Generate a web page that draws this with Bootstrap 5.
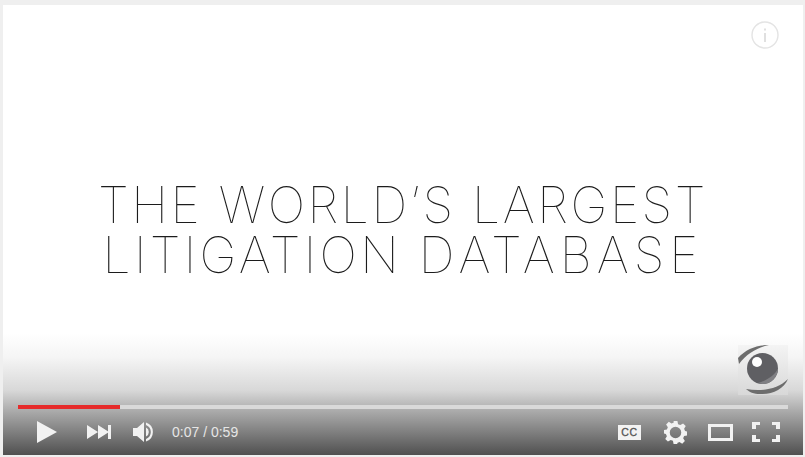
<!DOCTYPE html>
<html lang="en">
<head>
<meta charset="utf-8">
<title>Video player</title>
<link href="https://cdn.jsdelivr.net/npm/bootstrap@5.3.0/dist/css/bootstrap.min.css" rel="stylesheet">
<style>
html,body{height:100%;}
body{background:#efefef;overflow:hidden;font-family:"Liberation Sans",Arial,sans-serif;padding:5px 2px 2px 3px;}
.vp-frame{height:450px;background:#fff;}
.vp-top{height:48px;padding:16px 24px 0 0;}
.vp-stage{flex:1 1 auto;padding-top:127px;}
.vp-title{font-family:"Inter",sans-serif;font-weight:100;font-size:50px;line-height:50px;letter-spacing:2.5px;color:#1c1c1c;margin:0;text-align:center;}
.vp-word-a{letter-spacing:3.3px;}
.vp-word-b{letter-spacing:5px;}
.vp-bottom{height:122px;background:linear-gradient(to bottom,#fff 0,#f5f5f5 20%,#d8d8d8 47%,#a8a8a8 65%,#808080 81%,#505050 100%);padding:0 15px;}
.vp-logo{width:50px;height:50px;margin-top:12px;background:linear-gradient(#f4f4f4,#d8d8d8);}
.vp-track{height:4px;margin:10px 0 0 0;background:#d9d9d9;}
.vp-fill{width:102px;height:4px;background:#e62b2b;}
.vp-bar{height:46px;padding-left:19px;color:#e8e8e8;}
.vp-time{font-size:14px;color:#e6e6e6;margin-left:17px;}
.vp-ic{display:block;fill:#f2f2f2;}
</style>
</head>
<body>
<div class="vp-frame d-flex flex-column">
  <div class="vp-top d-flex justify-content-end">
    <svg width="28" height="28" viewBox="0 0 28 28" aria-label="info"><circle cx="14" cy="14" r="13" fill="none" stroke="#e4e4e4" stroke-width="1.4"/><rect x="13" y="12" width="2" height="9" fill="#e0e0e0"/><rect x="13" y="7.500" width="2" height="2" fill="#e0e0e0"/></svg>
  </div>
  <div class="vp-stage">
    <h1 class="vp-title">THE WORLD’S LARGEST<br><span class="vp-word-a">LITIGATION</span> <span class="vp-word-b">DATABASE</span></h1>
  </div>
  <div class="vp-bottom d-flex flex-column">
    <div class="d-flex justify-content-end">
      <svg class="vp-logo" viewBox="0 0 50 50" aria-label="logo">
        <path d="M0 13C8 4 19 0 31 0 21 2 9 8 1 19Z" fill="#6d6d6d"/>
        <path d="M8 44C24 47 40 44 50 34 46 44 34 50 22 49 16 49 11 47 8 44Z" fill="#6d6d6d"/>
        <circle cx="24.500" cy="23.500" r="15.500" fill="#5f5f63"/>
        <path d="M24.500 39A15.500 15.500 0 0 0 40 23.500C37 30 30 35 20 38Z" fill="#808084"/>
        <circle cx="19" cy="17" r="5" fill="#fff"/>
      </svg>
    </div>
    <div class="vp-track"><div class="vp-fill"></div></div>
    <div class="vp-bar d-flex align-items-center">
      <svg class="vp-ic" width="20" height="22" viewBox="0 0 20 22" aria-label="play"><path d="M0 0 20 11 0 22Z"/></svg>
      <svg class="vp-ic" width="24" height="14" viewBox="0 0 24 14" style="margin-left:30px" aria-label="next"><path d="M0 0 11 7 0 14Z M11 0 22 7 11 14Z"/><rect x="21" y="0" width="3" height="14"/></svg>
      <svg class="vp-ic" width="22" height="22" viewBox="0 0 22 22" style="margin-left:22px" aria-label="volume"><path d="M0 7H4L11 1V21L4 15H0Z"/><path d="M13 6.500A5 5 0 0 1 13 15.500Z"/><path d="M13 1.500A10 10 0 0 1 13 20.500V18A7.500 7.500 0 0 0 13 4Z"/></svg>
      <span class="vp-time">0:07 / 0:59</span>
      <div class="flex-grow-1"></div>
      <svg class="vp-ic" width="23" height="15" viewBox="0 0 23 15" aria-label="captions"><rect width="23" height="15" fill="#f2f2f2"/><text x="11.500" y="11" text-anchor="middle" font-family="Liberation Sans, sans-serif" font-size="10.500" letter-spacing=".6" stroke="#555" stroke-width=".3" fill="#555">CC</text></svg>
      <svg class="vp-ic" width="23" height="23" viewBox="0 0 24 24" style="margin-left:23px" aria-label="settings"><path fill-rule="evenodd" d="M10 0h4l.7 3.300 2.300 1 2.900-1.800 2.800 2.800L21 8.200l1 2.300 2 .5v4l-3 .7-1 2.300 1.800 2.900-2.800 2.800-2.900-1.800-2.300 1L14 24h-4l-.7-3.300-2.300-1-2.900 1.800-2.800-2.800L3 15.800l-1-2.300L0 13V9.500l3-.7 1-2.300-1.800-2.900L5 .8l2.900 1.800 2.300-1Z M12 6a6 6 0 1 0 0 12 6 6 0 0 0 0-12Z"/></svg>
      <svg class="vp-ic" width="25" height="17" viewBox="0 0 25 17" style="margin-left:21px" aria-label="theater"><path fill-rule="evenodd" d="M0 0H25V17H0Z M3 3V14H22V3Z"/></svg>
      <svg class="vp-ic" width="28" height="20" viewBox="0 0 28 20" style="margin-left:19px;margin-right:8px" aria-label="fullscreen"><path d="M0 0H8V3H4V7H0Z M20 0H28V7H24V3H20Z M0 13H4V17H8V20H0Z M24 13H28V20H20V17H24Z"/></svg>
    </div>
  </div>
</div>
</body>
</html>
